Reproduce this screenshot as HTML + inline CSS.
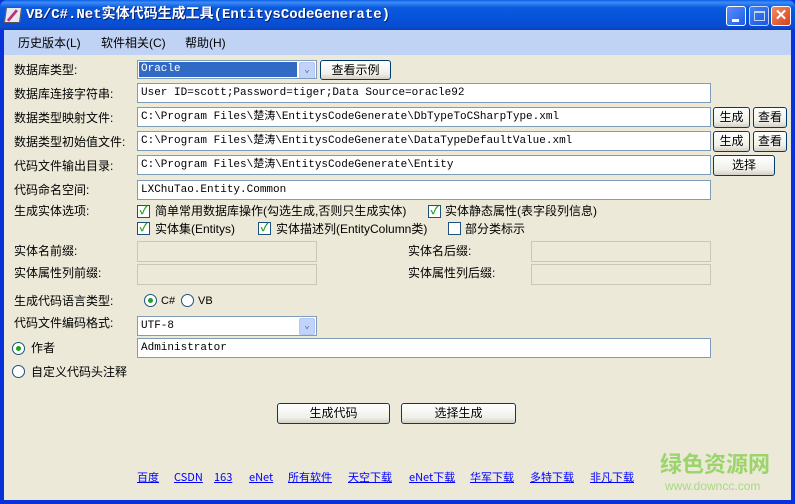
<!DOCTYPE html>
<html><head><meta charset="utf-8"><style>
*{margin:0;padding:0;box-sizing:border-box}
body{width:795px;height:504px;overflow:hidden;background:#0831d9;font-family:"Liberation Sans","Noto Sans CJK SC",sans-serif;font-size:12px;color:#000;position:relative}
.title{position:absolute;left:0;top:0;width:795px;height:30px;background:linear-gradient(#0a5fe8 0%,#3d8cf5 8%,#0a5ae0 25%,#0553d8 60%,#0a4bd0 90%,#0840b8 100%);border-radius:7px 7px 0 0}
.title .t{position:absolute;left:26px;top:6px;color:#fff;font-family:"Liberation Mono","Noto Sans CJK SC",monospace;font-weight:bold;font-size:14px;line-height:18px;text-shadow:1px 1px #0a1e70}
.frame{position:absolute;left:4px;top:30px;width:787px;height:470px;background:#ece9d8}
.menu{position:absolute;left:4px;top:30px;width:787px;height:25px;background:#c1d3f4}
.menu span{position:absolute;top:6px;line-height:14px}
.a{position:absolute;white-space:nowrap;line-height:14px}
.in{position:absolute;background:#fff;border:1px solid #7f9db9;font-family:"Liberation Mono","Noto Sans CJK SC",monospace;font-size:11px;line-height:13px;padding:3px 0 0 3px;white-space:nowrap;overflow:hidden;height:20px}
.dis{position:absolute;background:#ece9d8;border:1px solid #c9c7ba;height:21px}
.btn{position:absolute;border:1px solid #003c74;border-radius:3px;background:linear-gradient(#fff,#f0f0ea 70%,#d6d0c5);text-align:center;height:21px;line-height:19px}
.cb{position:absolute;width:13px;height:13px;border:1px solid #1c5180;background:#fff;color:#21a121;font-size:11px;line-height:11px;text-align:center;font-weight:bold}
.rb{position:absolute;width:13px;height:13px;border:1px solid #1c5180;border-radius:50%;background:#fff}
.rb.on::after{content:"";position:absolute;left:3px;top:3px;width:5px;height:5px;border-radius:50%;background:#21a121}
.dd{position:absolute;width:16px;height:17px;top:1px;right:1px;background:#c1d3fb;border:1px solid #b4c8f5;border-radius:2px;color:#4d6185;font-size:9px;text-align:center;line-height:15px}
.lk{position:absolute;top:471px;color:#0000ff;text-decoration:underline;font-size:11px;line-height:13px;font-family:"Noto Sans CJK SC",sans-serif}
.wb{position:absolute;top:6px;width:20px;height:20px;border:1px solid #fff;border-radius:3px;background:linear-gradient(135deg,#5b8ff7,#1e5ce6)}
</style></head><body>
<div class="title"><div style="position:absolute;left:5px;top:7px;width:16px;height:16px;background:#e8e8f0;border:1px solid #555;transform:skew(-8deg)"><div style="position:absolute;left:5px;top:1px;width:3px;height:13px;background:#c0307a;transform:rotate(35deg)"></div></div>
<div class="t">VB/C#.Net实体代码生成工具(EntitysCodeGenerate)</div>
<div class="wb" style="left:726px"><div style="position:absolute;left:5px;top:12px;width:7px;height:3px;background:#fff"></div></div>
<div class="wb" style="left:749px;opacity:.75"><div style="position:absolute;left:4px;top:4px;width:11px;height:10px;border:1px solid #fff;border-top-width:2px"></div></div>
<div class="wb" style="left:771px;background:linear-gradient(135deg,#f08a6a,#d9401c);color:#fff;font-weight:bold;font-size:15px;text-align:center;line-height:18px">✕</div>
</div>
<div class="frame"></div>
<div class="menu"><span style="left:14px">历史版本(L)</span><span style="left:97px">软件相关(C)</span><span style="left:181px">帮助(H)</span></div>

<div class="a" style="left:14px;top:63px">数据库类型:</div>
<div class="in" style="left:137px;top:60px;width:180px;height:19px;padding:1px"><div style="background:#316ac5;color:#fff;height:15px;width:158px;padding-left:2px;line-height:15px">Oracle</div><div class="dd">⌄</div></div>
<div class="btn" style="left:320px;top:60px;width:71px;height:20px;line-height:18px">查看示例</div>

<div class="a" style="left:14px;top:87px">数据库连接字符串:</div>
<div class="in" style="left:137px;top:83px;width:574px">User ID=scott;Password=tiger;Data Source=oracle92</div>
<div class="a" style="left:14px;top:111px">数据类型映射文件:</div>
<div class="in" style="left:137px;top:107px;width:574px">C:\Program Files\楚涛\EntitysCodeGenerate\DbTypeToCSharpType.xml</div>
<div class="btn" style="left:713px;top:107px;width:37px">生成</div><div class="btn" style="left:753px;top:107px;width:34px">查看</div>
<div class="a" style="left:14px;top:135px">数据类型初始值文件:</div>
<div class="in" style="left:137px;top:131px;width:574px">C:\Program Files\楚涛\EntitysCodeGenerate\DataTypeDefaultValue.xml</div>
<div class="btn" style="left:713px;top:131px;width:37px">生成</div><div class="btn" style="left:753px;top:131px;width:34px">查看</div>
<div class="a" style="left:14px;top:159px">代码文件输出目录:</div>
<div class="in" style="left:137px;top:155px;width:574px">C:\Program Files\楚涛\EntitysCodeGenerate\Entity</div>
<div class="btn" style="left:713px;top:155px;width:62px">选择</div>
<div class="a" style="left:14px;top:183px">代码命名空间:</div>
<div class="in" style="left:137px;top:180px;width:574px">LXChuTao.Entity.Common</div>

<div class="a" style="left:14px;top:204px">生成实体选项:</div>
<div class="cb" style="left:137px;top:205px">✓</div><div class="a" style="left:155px;top:204px">简单常用数据库操作(勾选生成,否则只生成实体)</div>
<div class="cb" style="left:428px;top:205px">✓</div><div class="a" style="left:445px;top:204px">实体静态属性(表字段列信息)</div>
<div class="cb" style="left:137px;top:222px">✓</div><div class="a" style="left:155px;top:222px">实体集(Entitys)</div>
<div class="cb" style="left:258px;top:222px">✓</div><div class="a" style="left:276px;top:222px">实体描述列(EntityColumn类)</div>
<div class="cb" style="left:448px;top:222px"></div><div class="a" style="left:465px;top:222px">部分类标示</div>

<div class="a" style="left:14px;top:244px">实体名前缀:</div><div class="dis" style="left:137px;top:241px;width:180px"></div>
<div class="a" style="left:408px;top:244px">实体名后缀:</div><div class="dis" style="left:531px;top:241px;width:180px"></div>
<div class="a" style="left:14px;top:266px">实体属性列前缀:</div><div class="dis" style="left:137px;top:264px;width:180px"></div>
<div class="a" style="left:408px;top:266px">实体属性列后缀:</div><div class="dis" style="left:531px;top:264px;width:180px"></div>

<div class="a" style="left:14px;top:294px">生成代码语言类型:</div>
<div class="rb on" style="left:144px;top:294px"></div><div class="a" style="left:161px;top:294px;font-size:11px">C#</div>
<div class="rb" style="left:181px;top:294px"></div><div class="a" style="left:198px;top:294px;font-size:11px">VB</div>
<div class="a" style="left:14px;top:316px">代码文件编码格式:</div>
<div class="in" style="left:137px;top:316px;width:180px;height:20px">UTF-8<div class="dd">⌄</div></div>
<div class="rb on" style="left:12px;top:342px"></div><div class="a" style="left:31px;top:341px">作者</div>
<div class="in" style="left:137px;top:338px;width:574px">Administrator</div>
<div class="rb" style="left:12px;top:365px"></div><div class="a" style="left:31px;top:365px">自定义代码头注释</div>

<div class="btn" style="left:277px;top:403px;width:113px">生成代码</div>
<div class="btn" style="left:401px;top:403px;width:115px">选择生成</div>

<span class="lk" style="left:137px">百度</span><span class="lk" style="left:174px">CSDN</span><span class="lk" style="left:214px">163</span><span class="lk" style="left:249px">eNet</span><span class="lk" style="left:288px">所有软件</span><span class="lk" style="left:348px">天空下载</span><span class="lk" style="left:409px">eNet下载</span><span class="lk" style="left:470px">华军下载</span><span class="lk" style="left:530px">多特下载</span><span class="lk" style="left:590px">非凡下载</span>
<div class="a" style="left:660px;top:452px;color:#9bd46a;font-size:22px;line-height:26px;font-weight:bold">绿色资源网</div>
<div class="a" style="left:665px;top:479px;color:#a8d888;font-size:12px">www.downcc.com</div>
</body></html>
